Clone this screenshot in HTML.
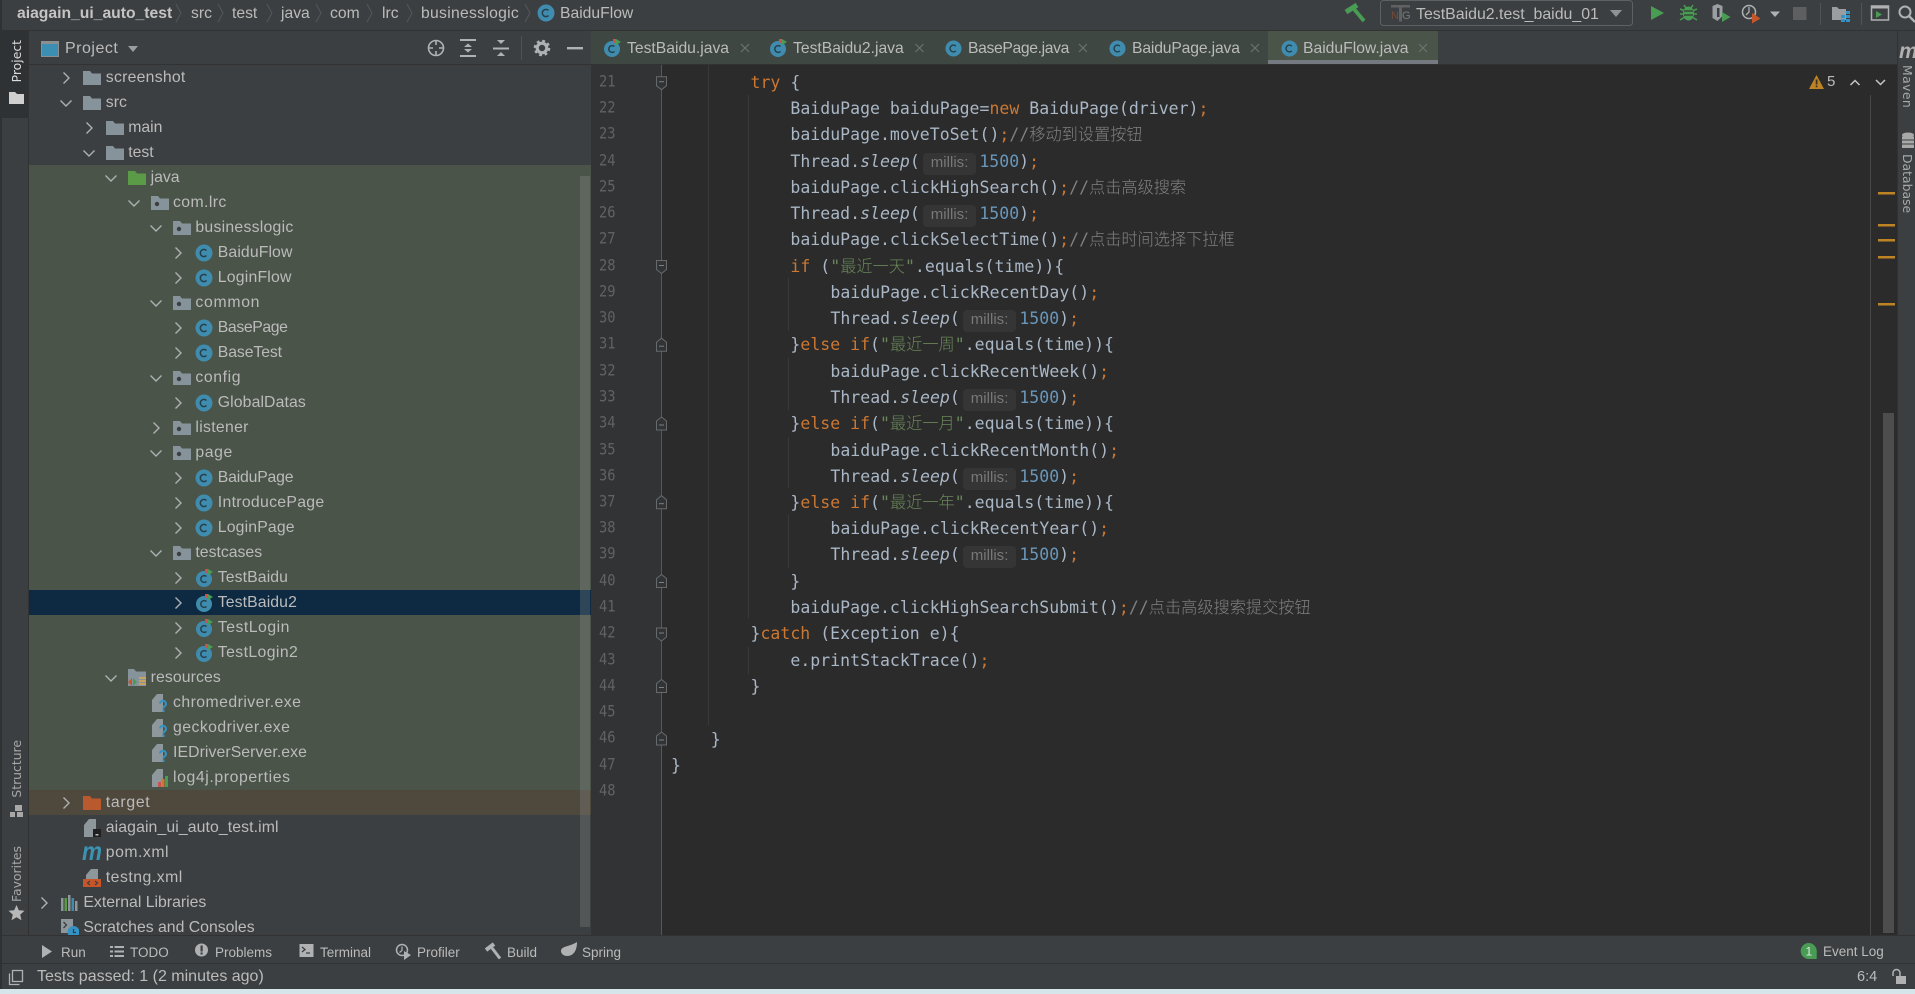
<!DOCTYPE html>
<html lang="en"><head><meta charset="utf-8"><title>BaiduFlow.java</title>
<style>
html,body{margin:0;padding:0;width:1915px;height:994px;overflow:hidden;background:#3c3f41}
.b{position:absolute}
.u{position:absolute;white-space:pre;font:15.7px/20px "Liberation Sans","Noto Sans CJK SC",sans-serif;color:#bbb}
.r{position:absolute;left:0;width:591px;height:25px;--d:1;margin-top:1px}
.r .t{position:absolute;left:calc(83.4px + 22.4px*var(--d));top:2px;white-space:pre;font:15.8px/20px "Liberation Sans",sans-serif;color:#bbb}
.r svg{position:absolute;overflow:visible}
.ic{left:calc(61px + 22.4px*var(--d));top:3px;width:18px;height:18px}
.ch{left:calc(37px + 22.4px*var(--d));top:5px;width:14px;height:14px}
.n{position:absolute;left:599px;width:30px;font:13.7px/20px "DejaVu Sans Mono",monospace;color:#606366;transform:scaleY(1.15);transform-origin:0 50%}
.l{position:absolute;white-space:pre;height:26px;margin-top:1px;font:16.5px/26px "DejaVu Sans Mono","Noto Sans CJK SC",monospace;letter-spacing:.02px;color:#a9b7c6}
.l i{font-style:italic}
.k{color:#cc7832}.s{color:#6a8759}.m{color:#6897bb}.c{color:#808080}
.z{font-family:"Noto Sans CJK SC",sans-serif;font-size:16.2px;letter-spacing:0;font-weight:300;line-height:0}
.h{display:inline-block;box-sizing:border-box;width:53.5px;height:21.5px;margin:0 3px;background:#353535;border-radius:4px;font:15px/20px "Liberation Sans",sans-serif;color:#787878;text-align:center;vertical-align:0}
.v{position:absolute;font:12.4px/16px "DejaVu Sans",sans-serif;color:#a8a8a8;writing-mode:vertical-rl;white-space:pre}
.f{transform:rotate(180deg)}
.w{font-size:13.5px}
</style></head><body>

<svg width="0" height="0" style="position:absolute">
<defs>
<symbol id="f" viewBox="0 0 18 18"><path fill="#87939a" d="M0 2h7l2 2.5h9V16H0z"/></symbol>
<symbol id="p" viewBox="0 0 18 18"><path fill="#87939a" d="M0 2h7l2 2.5h9V16H0z"/><circle cx="6" cy="10" r="2.2" fill="#3c3f41"/></symbol>
<symbol id="g" viewBox="0 0 18 18"><path fill="#5b9a47" d="M0 2h7l2 2.5h9V16H0z"/></symbol>
<symbol id="o" viewBox="0 0 18 18"><path fill="#b9592e" d="M0 2h7l2 2.5h9V16H0z"/></symbol>
<symbol id="c" viewBox="0 0 18 18"><circle cx="9" cy="9" r="8.5" fill="#3f8cae"/><path fill="none" stroke="#26404c" stroke-width="1.5" d="M11.5 6.5A3.6 3.6 0 1 0 11.5 11.5"/></symbol>
<symbol id="t" viewBox="0 0 18 18"><circle cx="9" cy="10" r="8" fill="#3f8cae"/><path fill="none" stroke="#26404c" stroke-width="1.5" d="M11.5 7.5A3.4 3.4 0 1 0 11.5 12.5"/><path fill="#c75450" d="M10 0h3v4h-3z"/><path fill="#499c54" d="M13 0l5 3-5 3z"/></symbol>
<symbol id="q" viewBox="0 0 18 18"><path fill="#8d979c" d="M1 6L6 0h6v18H1z"/><path fill="none" stroke="#3592c4" stroke-width="2" d="M9 9.5a3 3 0 1 1 5 2.5q-1.500 .8-1.500 2.500"/><path fill="#3592c4" d="M11.500 15.500h2v2.500h-2z"/></symbol>
<symbol id="l" viewBox="0 0 18 18"><path fill="#8d979c" d="M1 6L6 0h6v18H1z"/><path fill="#c75450" d="M7 13h3v5H7z"/><path fill="#cc7832" d="M10.500 10h3v8h-3z"/><path fill="#499c54" d="M14 7h3v11h-3z"/></symbol>
<symbol id="i" viewBox="0 0 18 18"><path fill="#8d979c" d="M1 6L6 0h7v18H1z"/><path fill="#1f1f1f" d="M10 10h8v8h-8z"/><path fill="#bbb" d="M12.500 15h3v1.500h-3z"/></symbol>
<symbol id="n" viewBox="0 0 18 18"><path fill="#8d979c" d="M3 6L8 0h7v10H3z"/><path fill="#c6562a" d="M0 10h19v8H0z"/><path fill="none" stroke="#3c3f41" stroke-width="1.200" d="M7 12l-2.500 2 2.500 2M12 12l2.500 2-2.500 2"/></symbol>
<symbol id="e" viewBox="0 0 18 18"><path fill="#8d979c" d="M0 4h2.500v13H0z"/><path fill="#5b9a47" d="M3.500 4h2.500v13H3.500z"/><path fill="#8d979c" d="M7 1h2.500v16H7z"/><path fill="#3f8cae" d="M10.500 4h2.500v13h-2.500z"/><path fill="#8d979c" d="M14 7h2.500v10H14z"/></symbol>
<symbol id="x" viewBox="0 0 18 18"><path fill="#8d979c" d="M0 0h12v14H0z"/><path fill="none" stroke="#3c3f41" stroke-width="1.300" d="M2.500 3l3 3-3 3"/><circle cx="12.500" cy="13" r="6" fill="#3592c4"/><path fill="none" stroke="#26404c" stroke-width="1.200" d="M12.500 10v3.500h2.500"/></symbol>
<symbol id="cr" viewBox="0 0 14 14"><path fill="none" stroke="#aeb0b2" stroke-width="1.400" d="M4.500 1.500L10 7l-5.500 5.500"/></symbol>
<symbol id="cd" viewBox="0 0 14 14"><path fill="none" stroke="#aeb0b2" stroke-width="1.400" d="M1.500 4.500L7 10l5.500-5.500"/></symbol>
<g id="fd"><path fill="#313335" stroke="#666a6d" d="M-5 -6H5V3L0 7-5 3z"/><path stroke="#7c8082" d="M-2.500 -1H2.500"/></g>
<g id="fu"><path fill="#313335" stroke="#666a6d" d="M-5 6H5V-3L0 -7-5 -3z"/><path stroke="#7c8082" d="M-2.500 1H2.500"/></g>
<g id="tx"><path fill="none" stroke="#6f7375" stroke-width="1.100" d="M-4 -4L4 4M4 -4L-4 4"/></g>
</defs>
</svg>

<!-- panels -->
<div class="b" style="left:0;top:0;width:1915px;height:30px;background:#3c3f41"></div>
<div class="b" style="left:0;top:30px;width:1915px;height:1px;background:#323232"></div>
<div class="b" style="left:0;top:0;width:2px;height:994px;background:#2f3132"></div>
<div class="b" style="left:2px;top:31px;width:26px;height:87px;background:#2f3234"></div>
<div class="b" style="left:28px;top:31px;width:1px;height:904px;background:#323232"></div>
<div class="b" style="left:29px;top:64px;width:562px;height:1px;background:#323232"></div>
<div class="b" style="left:29px;top:165px;width:562px;height:625px;background:#4a5449"></div>
<div class="b" style="left:29px;top:790px;width:562px;height:25px;background:#4f483d"></div>
<div class="b" style="left:29px;top:590px;width:562px;height:25px;background:#0d2a42"></div>
<div class="b" style="left:580px;top:176px;width:10px;height:751px;background:rgba(170,170,170,.22)"></div>
<div class="b" style="left:591px;top:31px;width:1306px;height:33px;background:#3c3f41"></div>
<div class="b" style="left:591px;top:31px;width:677px;height:33px;background:#3e4742"></div>
<div class="b" style="left:1268px;top:31px;width:170px;height:29px;background:#4a5449"></div>
<div class="b" style="left:1268px;top:60px;width:170px;height:4px;background:#747a80"></div>
<div class="b" style="left:591px;top:64px;width:1306px;height:1px;background:#323232"></div>
<div class="b" style="left:591px;top:65px;width:1306px;height:870px;background:#2b2b2b"></div>
<div class="b" style="left:591px;top:65px;width:70px;height:870px;background:#313335"></div>
<div class="b" style="left:661px;top:65px;width:1px;height:870px;background:#555759"></div>
<div class="b" style="left:1897px;top:31px;width:18px;height:904px;background:#3c3f41;border-left:1px solid #323232;box-sizing:border-box"></div>
<div class="b" style="left:1870px;top:95px;width:1px;height:840px;background:#484848"></div>
<div class="b" style="left:1883px;top:413px;width:11px;height:520px;background:#4d4d4d"></div>
<div class="b" style="left:2px;top:935px;width:1913px;height:1px;background:#323232"></div>
<div class="b" style="left:2px;top:963px;width:1913px;height:1px;background:#323232"></div>
<div class="b" style="left:0;top:989px;width:1915px;height:5px;background:#d6e5ea"></div>

<!-- indent guides -->
<div class="b" style="left:708px;top:65px;width:1px;height:660px;background:#393939"></div>
<div class="b" style="left:748px;top:95px;width:1px;height:523px;background:#393939"></div>
<div class="b" style="left:748px;top:647px;width:1px;height:27px;background:#393939"></div>
<div class="b" style="left:788px;top:278px;width:1px;height:53px;background:#393939"></div>
<div class="b" style="left:788px;top:358px;width:1px;height:52px;background:#393939"></div>
<div class="b" style="left:788px;top:437px;width:1px;height:51px;background:#393939"></div>
<div class="b" style="left:788px;top:515px;width:1px;height:53px;background:#393939"></div>

<!-- breadcrumb -->
<div class="u" style="left:17px;top:4px;font-weight:bold;font-size:15.7px;color:#c4c4c4">aiagain_ui_auto_test</div>
<div class="u" style="left:191px;top:4px">src</div>
<div class="u" style="left:232px;top:4px">test</div>
<div class="u" style="left:281px;top:4px">java</div>
<div class="u" style="left:330px;top:4px">com</div>
<div class="u" style="left:382px;top:4px">lrc</div>
<div class="u" style="left:421px;top:4px;letter-spacing:.3px">businesslogic</div>
<div class="u" style="left:560px;top:4px">BaiduFlow</div>

<!-- project header -->
<div class="u" style="left:65px;top:39px;font-size:16px;letter-spacing:.5px">Project</div>

<!-- tree -->
<div class="r" style="--d:1;top:65px"><svg class="ch"><use href="#cr"/></svg><svg class="ic"><use href="#f"/></svg><span class="t" style="letter-spacing:.25px">screenshot</span></div>
<div class="r" style="--d:1;top:90px"><svg class="ch"><use href="#cd"/></svg><svg class="ic"><use href="#f"/></svg><span class="t">src</span></div>
<div class="r" style="--d:2;top:115px"><svg class="ch"><use href="#cr"/></svg><svg class="ic"><use href="#f"/></svg><span class="t">main</span></div>
<div class="r" style="--d:2;top:140px"><svg class="ch"><use href="#cd"/></svg><svg class="ic"><use href="#f"/></svg><span class="t">test</span></div>
<div class="r" style="--d:3;top:165px"><svg class="ch"><use href="#cd"/></svg><svg class="ic"><use href="#g"/></svg><span class="t">java</span></div>
<div class="r" style="--d:4;top:190px"><svg class="ch"><use href="#cd"/></svg><svg class="ic"><use href="#p"/></svg><span class="t" style="letter-spacing:.4px">com.lrc</span></div>
<div class="r" style="--d:5;top:215px"><svg class="ch"><use href="#cd"/></svg><svg class="ic"><use href="#p"/></svg><span class="t" style="letter-spacing:.25px">businesslogic</span></div>
<div class="r" style="--d:6;top:240px"><svg class="ch"><use href="#cr"/></svg><svg class="ic"><use href="#c"/></svg><span class="t" style="letter-spacing:.1px">BaiduFlow</span></div>
<div class="r" style="--d:6;top:265px"><svg class="ch"><use href="#cr"/></svg><svg class="ic"><use href="#c"/></svg><span class="t" style="letter-spacing:.2px">LoginFlow</span></div>
<div class="r" style="--d:5;top:290px"><svg class="ch"><use href="#cd"/></svg><svg class="ic"><use href="#p"/></svg><span class="t" style="letter-spacing:.7px">common</span></div>
<div class="r" style="--d:6;top:315px"><svg class="ch"><use href="#cr"/></svg><svg class="ic"><use href="#c"/></svg><span class="t" style="letter-spacing:-.4px">BasePage</span></div>
<div class="r" style="--d:6;top:340px"><svg class="ch"><use href="#cr"/></svg><svg class="ic"><use href="#c"/></svg><span class="t" style="letter-spacing:-.1px">BaseTest</span></div>
<div class="r" style="--d:5;top:365px"><svg class="ch"><use href="#cd"/></svg><svg class="ic"><use href="#p"/></svg><span class="t" style="letter-spacing:.6px">config</span></div>
<div class="r" style="--d:6;top:390px"><svg class="ch"><use href="#cr"/></svg><svg class="ic"><use href="#c"/></svg><span class="t" style="letter-spacing:.1px">GlobalDatas</span></div>
<div class="r" style="--d:5;top:415px"><svg class="ch"><use href="#cr"/></svg><svg class="ic"><use href="#p"/></svg><span class="t" style="letter-spacing:.3px">listener</span></div>
<div class="r" style="--d:5;top:440px"><svg class="ch"><use href="#cd"/></svg><svg class="ic"><use href="#p"/></svg><span class="t" style="letter-spacing:.6px">page</span></div>
<div class="r" style="--d:6;top:465px"><svg class="ch"><use href="#cr"/></svg><svg class="ic"><use href="#c"/></svg><span class="t" style="letter-spacing:-.2px">BaiduPage</span></div>
<div class="r" style="--d:6;top:490px"><svg class="ch"><use href="#cr"/></svg><svg class="ic"><use href="#c"/></svg><span class="t" style="letter-spacing:.3px">IntroducePage</span></div>
<div class="r" style="--d:6;top:515px"><svg class="ch"><use href="#cr"/></svg><svg class="ic"><use href="#c"/></svg><span class="t" style="letter-spacing:.15px">LoginPage</span></div>
<div class="r" style="--d:5;top:540px"><svg class="ch"><use href="#cd"/></svg><svg class="ic"><use href="#p"/></svg><span class="t">testcases</span></div>
<div class="r" style="--d:6;top:565px"><svg class="ch"><use href="#cr"/></svg><svg class="ic"><use href="#t"/></svg><span class="t" style="letter-spacing:.1px">TestBaidu</span></div>
<div class="r" style="--d:6;top:590px"><svg class="ch"><use href="#cr"/></svg><svg class="ic"><use href="#t"/></svg><span class="t" style="letter-spacing:.1px">TestBaidu2</span></div>
<div class="r" style="--d:6;top:615px"><svg class="ch"><use href="#cr"/></svg><svg class="ic"><use href="#t"/></svg><span class="t" style="letter-spacing:.5px">TestLogin</span></div>
<div class="r" style="--d:6;top:640px"><svg class="ch"><use href="#cr"/></svg><svg class="ic"><use href="#t"/></svg><span class="t" style="letter-spacing:.4px">TestLogin2</span></div>
<div class="r" style="--d:3;top:665px"><svg class="ch"><use href="#cd"/></svg><svg class="ic" viewBox="0 0 18 18"><path fill="#87939a" d="M0 0h6l2 2.500h10V17H0z"/><path fill="#c6562a" d="M0 13l4-4v8z"/><path fill="#499c54" d="M5 9l4 4-4 4z"/><path fill="#c9a25d" d="M11 8h7v2h-7zM11 11h7v2h-7zM11 14h7v2h-7z"/></svg><span class="t" style="letter-spacing:.1px">resources</span></div>
<div class="r" style="--d:4;top:690px"><svg class="ic"><use href="#q"/></svg><span class="t" style="letter-spacing:.45px">chromedriver.exe</span></div>
<div class="r" style="--d:4;top:715px"><svg class="ic"><use href="#q"/></svg><span class="t" style="letter-spacing:.45px">geckodriver.exe</span></div>
<div class="r" style="--d:4;top:740px"><svg class="ic"><use href="#q"/></svg><span class="t" style="letter-spacing:.08px">IEDriverServer.exe</span></div>
<div class="r" style="--d:4;top:765px"><svg class="ic"><use href="#l"/></svg><span class="t" style="letter-spacing:.6px">log4j.properties</span></div>
<div class="r" style="--d:1;top:790px"><svg class="ch"><use href="#cr"/></svg><svg class="ic"><use href="#o"/></svg><span class="t" style="letter-spacing:.7px">target</span></div>
<div class="r" style="--d:1;top:815px"><svg class="ic"><use href="#i"/></svg><span class="t" style="letter-spacing:.1px">aiagain_ui_auto_test.iml</span></div>
<div class="r" style="--d:1;top:840px"><svg class="ic" viewBox="0 0 18 18"><text x="-1" y="16" font-family="Liberation Sans" font-weight="bold" font-style="italic" font-size="26" fill="#3b93b4" textLength="20" lengthAdjust="spacingAndGlyphs">m</text></svg><span class="t" style="letter-spacing:.5px">pom.xml</span></div>
<div class="r" style="--d:1;top:865px"><svg class="ic"><use href="#n"/></svg><span class="t" style="letter-spacing:.5px">testng.xml</span></div>
<div class="r" style="--d:0;top:890px"><svg class="ch"><use href="#cr"/></svg><svg class="ic"><use href="#e"/></svg><span class="t">External Libraries</span></div>
<div class="r" style="--d:0;top:915px;height:19px;overflow:hidden"><svg class="ic"><use href="#x"/></svg><span class="t">Scratches and Consoles</span></div>

<!-- editor tabs -->
<div class="u" style="left:627px;top:39px">TestBaidu.java</div>
<div class="u" style="left:793px;top:39px">TestBaidu2.java</div>
<div class="u" style="left:968px;top:39px;letter-spacing:-.35px">BasePage.java</div>
<div class="u" style="left:1132px;top:39px;letter-spacing:-.15px">BaiduPage.java</div>
<div class="u" style="left:1303px;top:39px">BaiduFlow.java</div>

<!-- line numbers -->
<div class="n" style="top:72px">21</div><div class="n" style="top:98px">22</div><div class="n" style="top:124px">23</div><div class="n" style="top:151px">24</div><div class="n" style="top:177px">25</div><div class="n" style="top:203px">26</div><div class="n" style="top:229px">27</div><div class="n" style="top:256px">28</div><div class="n" style="top:282px">29</div><div class="n" style="top:308px">30</div><div class="n" style="top:334px">31</div><div class="n" style="top:361px">32</div><div class="n" style="top:387px">33</div><div class="n" style="top:413px">34</div><div class="n" style="top:440px">35</div><div class="n" style="top:466px">36</div><div class="n" style="top:492px">37</div><div class="n" style="top:518px">38</div><div class="n" style="top:544px">39</div><div class="n" style="top:571px">40</div><div class="n" style="top:597px">41</div><div class="n" style="top:623px">42</div><div class="n" style="top:650px">43</div><div class="n" style="top:676px">44</div><div class="n" style="top:702px">45</div><div class="n" style="top:728px">46</div><div class="n" style="top:755px">47</div><div class="n" style="top:781px">48</div>

<!-- code -->
<div class="l" style="left:750.500px;top:69px"><span class="k">try</span> {</div>
<div class="l" style="left:790.400px;top:95px">BaiduPage baiduPage=<span class="k">new</span> BaiduPage(driver)<span class="k">;</span></div>
<div class="l" style="left:790.400px;top:121px">baiduPage.moveToSet()<span class="k">;</span><span class="c">//<span class="z">移动到设置按钮</span></span></div>
<div class="l" style="left:790.400px;top:148px">Thread.<i>sleep</i>(<span class="h">millis:</span><span class="m">1500</span>)<span class="k">;</span></div>
<div class="l" style="left:790.400px;top:174px">baiduPage.clickHighSearch()<span class="k">;</span><span class="c">//<span class="z">点击高级搜索</span></span></div>
<div class="l" style="left:790.400px;top:200px">Thread.<i>sleep</i>(<span class="h">millis:</span><span class="m">1500</span>)<span class="k">;</span></div>
<div class="l" style="left:790.400px;top:226px">baiduPage.clickSelectTime()<span class="k">;</span><span class="c">//<span class="z">点击时间选择下拉框</span></span></div>
<div class="l" style="left:790.400px;top:253px"><span class="k">if</span> (<span class="s">"<span class="z">最近一天</span>"</span>.equals(time)){</div>
<div class="l" style="left:830.400px;top:279px">baiduPage.clickRecentDay()<span class="k">;</span></div>
<div class="l" style="left:830.400px;top:305px">Thread.<i>sleep</i>(<span class="h">millis:</span><span class="m">1500</span>)<span class="k">;</span></div>
<div class="l" style="left:790.400px;top:331px">}<span class="k">else if</span>(<span class="s">"<span class="z">最近一周</span>"</span>.equals(time)){</div>
<div class="l" style="left:830.400px;top:358px">baiduPage.clickRecentWeek()<span class="k">;</span></div>
<div class="l" style="left:830.400px;top:384px">Thread.<i>sleep</i>(<span class="h">millis:</span><span class="m">1500</span>)<span class="k">;</span></div>
<div class="l" style="left:790.400px;top:410px">}<span class="k">else if</span>(<span class="s">"<span class="z">最近一月</span>"</span>.equals(time)){</div>
<div class="l" style="left:830.400px;top:437px">baiduPage.clickRecentMonth()<span class="k">;</span></div>
<div class="l" style="left:830.400px;top:463px">Thread.<i>sleep</i>(<span class="h">millis:</span><span class="m">1500</span>)<span class="k">;</span></div>
<div class="l" style="left:790.400px;top:489px">}<span class="k">else if</span>(<span class="s">"<span class="z">最近一年</span>"</span>.equals(time)){</div>
<div class="l" style="left:830.400px;top:515px">baiduPage.clickRecentYear()<span class="k">;</span></div>
<div class="l" style="left:830.400px;top:541px">Thread.<i>sleep</i>(<span class="h">millis:</span><span class="m">1500</span>)<span class="k">;</span></div>
<div class="l" style="left:790.400px;top:568px">}</div>
<div class="l" style="left:790.400px;top:594px">baiduPage.clickHighSearchSubmit()<span class="k">;</span><span class="c">//<span class="z">点击高级搜索提交按钮</span></span></div>
<div class="l" style="left:750.500px;top:620px">}<span class="k">catch</span> (Exception e){</div>
<div class="l" style="left:790.400px;top:647px">e.printStackTrace()<span class="k">;</span></div>
<div class="l" style="left:750.500px;top:673px">}</div>
<div class="l" style="left:710.700px;top:726px">}</div>
<div class="l" style="left:671px;top:752px">}</div>

<!-- right warning -->
<div class="u" style="left:1827px;top:72px;font-size:15px">5</div>

<!-- vertical stripe labels -->
<div class="v f" style="left:9px;top:40px;color:#dcdcdc">Project</div>
<div class="v f" style="left:9px;top:740px">Structure</div>
<div class="v f" style="left:9px;top:846px">Favorites</div>
<div class="v" style="left:1899px;top:65px;letter-spacing:.4px">Maven</div>
<div class="v" style="left:1899px;top:154px">Database</div>

<!-- bottom bar -->
<div class="u w" style="left:61px;top:943px">Run</div>
<div class="u w" style="left:130px;top:943px">TODO</div>
<div class="u w" style="left:215px;top:943px">Problems</div>
<div class="u w" style="left:320px;top:943px">Terminal</div>
<div class="u w" style="left:417px;top:943px">Profiler</div>
<div class="u w" style="left:507px;top:943px">Build</div>
<div class="u w" style="left:582px;top:943px">Spring</div>
<div class="u w" style="left:1823px;top:942px">Event Log</div>
<div class="u" style="left:37px;top:967px;font-size:16px">Tests passed: 1 (2 minutes ago)</div>
<div class="u" style="left:1857px;top:967px;font-size:14.500px">6:4</div>

<!-- overlay icons -->
<svg class="b" style="left:0;top:0;overflow:hidden;pointer-events:none" width="1915" height="994" viewBox="0 0 1915 994">
<!-- breadcrumb separators -->
<g fill="none" stroke="#55585a" stroke-width="1">
<path d="M176 4l5 9-5 9M218 4l5 9-5 9M267 4l5 9-5 9M316 4l5 9-5 9M367 4l5 9-5 9M407 4l5 9-5 9M525 4l5 9-5 9"/>
</g>
<use href="#c" x="537" y="4" width="18" height="18"/>

<!-- combo -->
<rect x="1380.500" y="0.500" width="252" height="25" rx="3" fill="none" stroke="#5e6161"/>
<path fill="none" stroke="#499c54" stroke-width="3.800" d="M1354 9L1364 21"/>
<path fill="none" stroke="#499c54" stroke-width="5" d="M1346 12L1357 5"/>
<path fill="#5f6162" d="M1391 5h19v2.500h-8v14h-3v-14h-8z"/>
<text x="1391" y="19" font-family="Liberation Sans" font-size="11" fill="#7a4a38">N</text>
<text x="1402" y="19" font-family="Liberation Sans" font-size="11" fill="#787a7a">G</text>
<text x="1416" y="19" font-family="Liberation Sans" font-size="15.900" fill="#bbb">TestBaidu2.test_baidu_01</text>
<path fill="#8f9396" d="M1610 10h12l-6 7z"/>

<!-- toolbar -->
<path fill="#499c54" d="M1651 6l13 7-13 7z"/>
<g fill="#499c54">
<ellipse cx="1688.500" cy="13.500" rx="5.500" ry="7"/>
<path stroke="#499c54" stroke-width="1.500" d="M1680 9l5 2M1697 9l-5 2M1680 14h4M1697 14h-4M1680 20l5-3M1697 20l-5-3M1684 5l2 3M1693 5l-2 3"/>
<path stroke="#2f3a30" stroke-width="1.200" d="M1684 11h9M1684 15h9"/>
</g>
<path fill="#9a9ea1" d="M1712.500 6l5-2 5 2v10l-5 5-5-3z"/>
<path fill="#3c3f41" d="M1717 8h2.500v9H1717z"/>
<path fill="#499c54" d="M1722 12l8.500 5-8.500 5z"/>
<circle cx="1749" cy="12" r="6.500" fill="none" stroke="#afb1b3" stroke-width="1.500"/>
<path fill="none" stroke="#afb1b3" stroke-width="1.300" d="M1749 7v5l-3 3"/>
<path fill="#c6562a" d="M1752 13l8.500 5.500-8.500 5z"/>
<path fill="#afb1b3" d="M1770 11.500h10l-5 5.500z"/>
<rect x="1793" y="7" width="13.500" height="13" fill="#5e5f60"/>
<rect x="1820" y="3" width="1" height="22" fill="#515355"/>
<path fill="#9a9ea1" d="M1832 7h5l2 2h7v11h-14z"/>
<path fill="#3592c4" d="M1841 15h4v3h-4zM1846 15h4v3h-4zM1846 11h4v3h-4zM1841 19h4v3h-4zM1846 19h4v3h-4z"/>
<rect x="1861" y="3" width="1" height="22" fill="#515355"/>
<rect x="1871.500" y="6" width="17" height="14" fill="none" stroke="#afb1b3" stroke-width="1.500"/>
<rect x="1871" y="5.500" width="18" height="3" fill="#afb1b3"/>
<path fill="#499c54" d="M1876 11l6 3.500-6 3.500z"/>
<circle cx="1905" cy="12" r="5.500" fill="none" stroke="#afb1b3" stroke-width="2"/>
<path stroke="#afb1b3" stroke-width="2.300" d="M1909 16l6 6"/>

<!-- project toolwindow header -->
<rect x="41.500" y="41.500" width="17" height="15" fill="#3a8fb3" stroke="#8b8f91"/>
<rect x="41.500" y="41.500" width="17" height="2.500" fill="#8b8f91"/>
<path fill="#9a9ea1" d="M128 46h10l-5 6z"/>
<g fill="none" stroke="#afb1b3" stroke-width="1.600">
<circle cx="436" cy="48" r="7.500"/><path d="M436 40v5M436 51v5M428 48h5M439 48h5"/>
</g>
<g fill="#afb1b3">
<path d="M460 39h16v2h-16zM460 55h16v2h-16z"/><path d="M464 47l4-3.500 4 3.500zM464 49h8l-4 3.500z"/>
<path d="M493 47.500h16v2h-16z"/><path d="M497 40h8l-4 4zM501 52l4 4h-8z"/>
<rect x="521" y="36" width="1" height="24" fill="#505254"/>
<circle cx="542" cy="48" r="4.800" fill="none" stroke="#afb1b3" stroke-width="3.200"/>
<circle cx="542" cy="48" r="7" fill="none" stroke="#afb1b3" stroke-width="2.600" stroke-dasharray="2.750 2.750"/>
<path d="M567 47h16v2.400h-16z"/>
</g>

<!-- tab icons -->
<use href="#t" x="603" y="39" width="18" height="18"/>
<use href="#t" x="769" y="39" width="18" height="18"/>
<use href="#c" x="945" y="40" width="17" height="17"/>
<use href="#c" x="1109" y="40" width="17" height="17"/>
<use href="#c" x="1281" y="40" width="17" height="17"/>
<use href="#tx" x="745" y="48"/><use href="#tx" x="919.500" y="48"/><use href="#tx" x="1083" y="48"/><use href="#tx" x="1255" y="48"/><use href="#tx" x="1423" y="48"/>

<!-- folds -->
<use href="#fd" x="661.500" y="82.700"/><use href="#fd" x="661.500" y="266.500"/>
<use href="#fu" x="661.500" y="345.200"/><use href="#fu" x="661.500" y="424"/><use href="#fu" x="661.500" y="502.700"/><use href="#fu" x="661.500" y="581.500"/>
<use href="#fd" x="661.500" y="634"/><use href="#fu" x="661.500" y="686.500"/><use href="#fu" x="661.500" y="739"/>

<!-- warning + nav -->
<path fill="#be8423" d="M1816.500 75l7.500 14h-15z"/>
<path fill="#3a3226" d="M1815.700 79.500h1.800v5h-1.800zM1815.700 85.500h1.800v1.800h-1.800z"/>
<path fill="none" stroke="#c4c6c8" stroke-width="1.500" d="M1850.500 85l4.500-4.500 4.500 4.500M1876 80l4.500 4.500 4.500-4.500"/>

<!-- error stripe -->
<g fill="#be8423"><rect x="1878" y="192" width="17" height="2.500"/><rect x="1878" y="224" width="17" height="2.500"/><rect x="1878" y="239" width="17" height="2.500"/><rect x="1878" y="256" width="17" height="2.500"/><rect x="1878" y="303" width="17" height="2.500"/></g>

<!-- left/right stripe icons -->
<path fill="#d0d0d0" d="M9 92h6l2 2h7v10H9z"/>
<path fill="#a8a8a8" d="M15 805h7v6h-7zM10 812h5v5h-5zM17 812h6v5h-6z"/>
<path fill="#b8b8b8" d="M16.500 905l2.300 5.300 5.700.5-4.300 3.800 1.300 5.600-5-3-5 3 1.300-5.600-4.300-3.800 5.700-.5z"/>
<text x="1899" y="58" font-family="Liberation Sans" font-weight="bold" font-style="italic" font-size="21" fill="#b0b0b0">m</text>
<g fill="#a8a8a8"><ellipse cx="1908" cy="135" rx="6" ry="2.500"/><rect x="1902" y="136.500" width="12" height="3"/><rect x="1902" y="140.500" width="12" height="3"/><rect x="1902" y="144.500" width="12" height="3.500"/></g>

<!-- bottom icons -->
<path fill="#afb1b3" d="M42 945l10 6.500-10 6.500z"/>
<g fill="#afb1b3"><path d="M110 946h3v2h-3zM114.500 946h9.500v2h-9.500zM110 950.500h3v2h-3zM114.500 950.500h9.500v2h-9.500zM110 955h3v2h-3zM114.500 955h9.500v2h-9.500z"/></g>
<circle cx="201.500" cy="950" r="6.500" fill="#afb1b3"/><path fill="#3c3f41" d="M200.500 945.500h2.200v6h-2.200zM200.500 952.500h2.200v2h-2.200z"/>
<rect x="299.500" y="944" width="14" height="13" fill="#afb1b3"/><path fill="none" stroke="#3c3f41" stroke-width="1.300" d="M302 947l3 2.500-3 2.500M306 953h4"/>
<circle cx="402" cy="950" r="5.500" fill="none" stroke="#afb1b3" stroke-width="1.500"/><path fill="none" stroke="#afb1b3" stroke-width="1.200" d="M402 946.500v4l-2.500 2"/><path fill="#afb1b3" d="M404 951l7 4-7 5z"/>
<path fill="none" stroke="#afb1b3" stroke-width="3" d="M492 948l8 10.500"/><path fill="none" stroke="#afb1b3" stroke-width="4" d="M486 950l8-6"/>
<path fill="#afb1b3" d="M577 942c0 8-3 14-10 14-3 0-6-2-6-5 0-5 8-4 16-9z"/>
<circle cx="1808.700" cy="951" r="8" fill="#499c54"/><rect x="1808.700" y="951" width="8" height="8" fill="#499c54"/>
<text x="1805.500" y="955.500" font-family="Liberation Sans" font-size="12" fill="#dfe8df">1</text>
<rect x="12.500" y="970.500" width="10" height="11" fill="none" stroke="#afb1b3" stroke-width="1.300"/>
<path fill="none" stroke="#afb1b3" stroke-width="1.300" d="M9.500 973.500v11h10"/>
<path fill="none" stroke="#afb1b3" stroke-width="1.500" d="M1893 976v-3a3.500 3.500 0 0 1 7 0v3"/>
<rect x="1896" y="976" width="10" height="8" fill="#afb1b3"/>
</svg>
</body></html>
